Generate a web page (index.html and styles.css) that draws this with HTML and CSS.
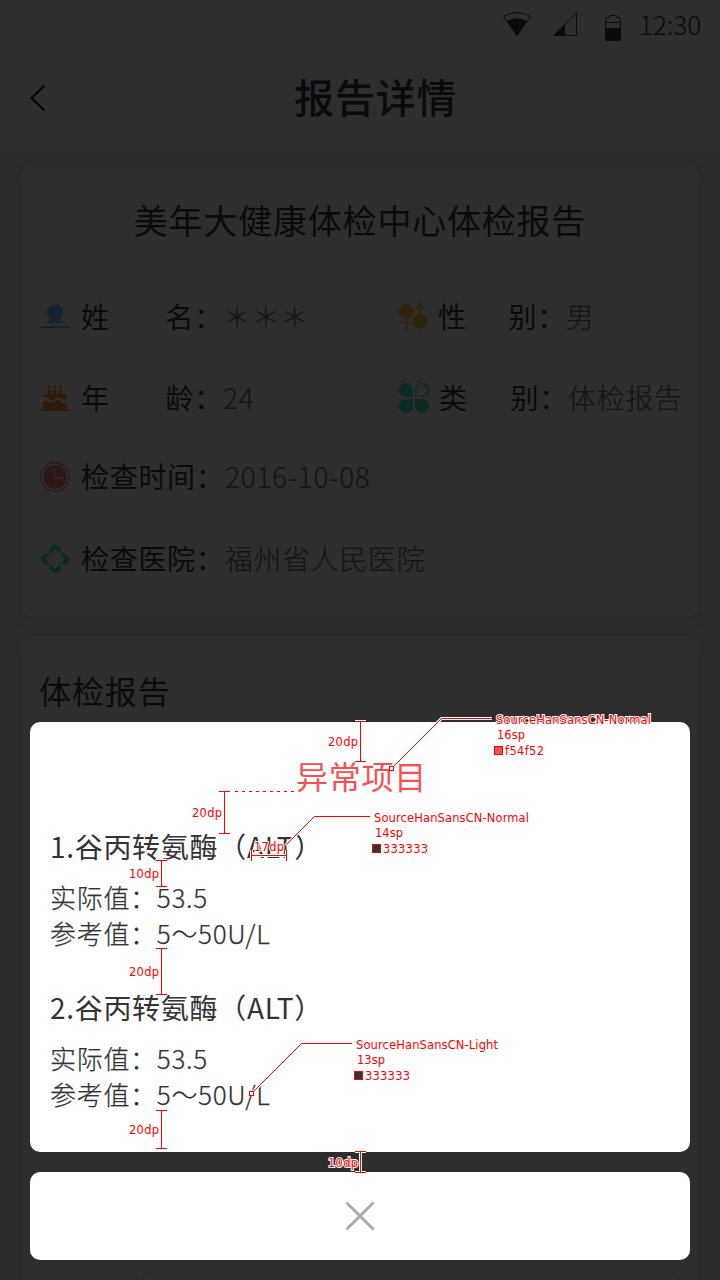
FILE: index.html
```html
<!DOCTYPE html>
<html lang="zh-CN">
<head>
<meta charset="utf-8">
<title>报告详情</title>
<link rel="stylesheet" href="styles.css">
</head>
<body>
<div class="screen">
  <header class="header">
    <div class="status">
      <svg class="wifi" width="30" height="26" viewBox="0 0 30 26"><path d="M1.500 4.500Q15-3.500 28.500 4.500L15 23.500Z" fill="none" stroke="#0a0a0a"/><path d="M5 9Q15 3.500 25 9L15 23.500Z" fill="#0a0a0a"/></svg>
      <svg class="signal" width="26" height="26" viewBox="0 0 26 26"><path d="M1 23.500H23.500V1Z" fill="none" stroke="#0a0a0a"/><path d="M0 24H12V12Z" fill="#0a0a0a"/></svg>
      <svg class="battery" width="18" height="28" viewBox="0 0 18 28"><path d="M1.500 5.500Q1.500 3.500 4 3.500H5Q5 1.500 7 1.500H11Q13 1.500 13 3.500H14Q16.500 3.500 16.500 5.500V24Q16.500 26.500 14 26.500H4Q1.500 26.500 1.500 24ZM1.500 8.500H16.500" fill="none" stroke="#0a0a0a"/><path d="M1 14H17V24Q17 27 14 27H4Q1 27 1 24Z" fill="#0a0a0a"/></svg>
      <span class="clock">12:30</span>
    </div>
    <div class="nav">
      <svg class="back" width="18" height="30" viewBox="0 0 18 30"><path d="M15.500 2.500L2.500 15L15.500 27.500" fill="none" stroke="#000" stroke-width="2"/></svg>
      <h1 class="page-title">报告详情</h1>
    </div>
  </header>

  <section class="card profile">
    <h2 class="card-title">美年大健康体检中心体检报告</h2>
    <div class="fields">
      <div class="row">
        <div class="field">
          <svg class="icon" width="30" height="30" viewBox="0 0 30 30" fill="#15222e"><circle cx="15" cy="10.500" r="8"/><path d="M12 16H18V18Q24 19 25.500 21.500H4.500Q6 19 12 18ZM0 24H30V26H0Z"/></svg>
          <span class="label short"><b>姓</b><b>名：</b></span><span class="value stars">＊＊＊</span>
        </div>
        <div class="field right">
          <svg class="icon" width="30" height="30" viewBox="0 0 30 30"><g fill="#2e230a"><circle cx="7.200" cy="9" r="7.200"/><circle cx="20.800" cy="19.500" r="7.300"/></g><path d="M7.300 15V26M2.500 20.500H12.500M20.800 14V3.500M16.500 7L20.800 2.500L25.100 7" fill="none" stroke="#2e230a" stroke-width="2" stroke-linecap="round"/></svg>
          <span class="label gender"><b>性</b><b>别：</b></span><span class="value">男</span>
        </div>
      </div>
      <div class="row">
        <div class="field">
          <svg class="icon" width="30" height="30" viewBox="0 0 30 30" fill="#2e1a08"><path d="M0 26H30V28H0ZM3 27V19Q6 17 9 19T15 18.500T21 19T27 19V27ZM3 15Q3 11 7 11H23Q27 11 27 15Q24 18 21 15.500T15 16T9 15.500T3 15ZM8 6.500H11V12H8ZM13.500 6.500H16.500V12H13.500ZM19 6.500H22V12H19Z"/><circle cx="9.500" cy="3.800" r="1.600"/><circle cx="15" cy="3.800" r="1.600"/><circle cx="20.500" cy="3.800" r="1.600"/></svg>
          <span class="label short"><b>年</b><b>龄：</b></span><span class="value age">24</span>
        </div>
        <div class="field right">
          <svg class="icon" width="30" height="30" viewBox="0 0 30 30"><path d="M14 14H7A7 7 0 1 1 14 7ZM14 16V23A7 7 0 1 1 7 16ZM16 16H23A7 7 0 1 1 16 23Z" fill="#0c2926"/><path d="M16.800 14V7A6.200 6.200 0 1 1 23 13.200H20" fill="none" stroke="#0c2926" stroke-width="1.600"/></svg>
          <span class="label kind"><b>类</b><b>别：</b></span><span class="value">体检报告</span>
        </div>
      </div>
      <div class="row date">
        <div class="field">
          <svg class="icon" width="30" height="30" viewBox="0 0 30 30"><circle cx="15" cy="15" r="14.300" fill="none" stroke="#2e1516" stroke-width="1.200"/><circle cx="15" cy="15" r="11.800" fill="#2e1516"/><path d="M14.500 7V16H24" fill="none" stroke="#2e2a2a" stroke-width="1.500"/></svg>
          <span class="label">检查时间：</span><span class="value">2016-10-08</span>
        </div>
      </div>
      <div class="row">
        <div class="field">
          <svg class="icon" width="30" height="30" viewBox="0 0 30 30"><g id="petal"><path d="M9 6.500Q9 5 10.500 4L13 1.500Q15-.5 17 1.500L19.500 4Q21 5 21 6.500Q20.500 8.500 18 10.500V8L16 6H14L12 8V10.500Q9.500 8.500 9 6.500Z" fill="#0d291d"/></g><use href="#petal" transform="rotate(90 15 15)"/><use href="#petal" transform="rotate(180 15 15)"/><use href="#petal" transform="rotate(270 15 15)"/></svg>
          <span class="label">检查医院：</span><span class="value">福州省人民医院</span>
        </div>
      </div>
    </div>
  </section>

  <section class="card report">
    <h2 class="section-title">体检报告</h2>
    <div class="report-box"></div>
  </section>

  <div class="modal">
    <div class="sheet">
      <h2 class="sheet-title">异常项目</h2>
      <div class="item">
        <h3 class="item-title">1.谷丙转氨酶（ALT）</h3>
        <p class="item-line">实际值：53.5</p>
        <p class="item-line">参考值：5～50U/L</p>
      </div>
      <div class="item">
        <h3 class="item-title">2.谷丙转氨酶（ALT）</h3>
        <p class="item-line">实际值：53.5</p>
        <p class="item-line">参考值：5～50U/L</p>
      </div>
    </div>
    <div class="close">
      <svg width="30" height="30" viewBox="0 0 30 30"><path d="M2.200 2.200L27.800 27.800M27.800 2.200L2.200 27.800" stroke="#aaa" stroke-width="2.800" stroke-linecap="round"/></svg>
    </div>
  </div>

  <svg class="specs" width="720" height="1280" viewBox="0 0 720 1280">
    <defs>
      <g id="lines">
        <path d="M355 721.500H366M360.500 721.500V761.500M355 761.500H366"/>
        <path d="M219 791.500H230M224.500 791.500V833.500M219 833.500H230"/>
        <path d="M251.500 850V861M251.500 855.500H286.500M286.500 850V861"/>
        <path d="M156 860.500H167M161.500 860.500V886.500M156 886.500H167"/>
        <path d="M156 948.500H167M161.500 948.500V994.500M156 994.500H167"/>
        <path d="M156 1110.500H167M161.500 1110.500V1148.500M156 1148.500H167"/>
        <path d="M355 1151.500H366M360.500 1151.500V1172.500M355 1172.500H366"/>
        <path d="M391.500 768.500L441.500 718.500H492"/>
        <path d="M285.500 845.500L314.500 816.500H370"/>
        <path d="M251.500 1093.500L301.500 1043.500H352"/>
      </g>
    </defs>
    <use href="#lines" class="halo"/>
    <use href="#lines" class="line"/>
    <path class="line" d="M235 791.500H295" stroke-dasharray="3 4"/>
    <rect class="handle" x="389.500" y="766.500" width="4" height="4"/>
    <rect class="handle" x="249.500" y="1091.500" width="4" height="4"/>
    <rect class="swatch red" x="494.500" y="746.500" width="8" height="8"/>
    <rect class="swatch" x="372.500" y="844.500" width="8" height="8"/>
    <rect class="swatch" x="354.500" y="1071.500" width="8" height="8"/>
    <g class="note">
      <text x="328" y="746" textLength="30">20dp</text>
      <text x="192" y="817" textLength="30">20dp</text>
      <text x="254" y="851" textLength="30">17dp</text>
      <text x="129" y="878" textLength="30">10dp</text>
      <text x="129" y="976" textLength="30">20dp</text>
      <text x="129" y="1134" textLength="30">20dp</text>
      <text x="328" y="1167" textLength="30">10dp</text>
      <text x="496" y="724" textLength="155">SourceHanSansCN-Normal</text>
      <text x="497" y="739" textLength="28">16sp</text>
      <text x="505" y="755" textLength="39">f54f52</text>
      <text x="374" y="822" textLength="155">SourceHanSansCN-Normal</text>
      <text x="375" y="837" textLength="28">14sp</text>
      <text x="383" y="853" textLength="45">333333</text>
      <text x="356" y="1049" textLength="142">SourceHanSansCN-Light</text>
      <text x="357" y="1064" textLength="28">13sp</text>
      <text x="365" y="1080" textLength="45">333333</text>
    </g>
  </svg>
</div>
</body>
</html>
```
FILE: styles.css
```css
* { box-sizing: border-box; }
body { margin: 0; }
h1, h2, h3, p { margin: 0; font-weight: 400; }
b { font-weight: inherit; }
svg { display: block; flex: none; }

.screen {
  position: relative;
  width: 720px;
  height: 1280px;
  overflow: hidden;
  background: #2d2d2d;
  color: #0a0a0a;
  font-family: "Noto Sans CJK SC", sans-serif;
  letter-spacing: .7px;
}

.header { height: 146px; background: #2e2e2e; }
.status { display: flex; align-items: center; height: 50px; padding-left: 502px; }
.signal { margin-left: 21px; }
.battery { margin-left: 25px; margin-top: 6px; }
.clock { margin-left: 17px; padding-bottom: 2px; font-size: 26px; font-weight: 300; line-height: 48px; letter-spacing: 0; white-space: nowrap; -webkit-text-stroke: .2px; }
.nav { display: flex; align-items: center; height: 96px; padding-left: 28px; }
.back { margin-left: .5px; }
.page-title { flex: 1; padding: 0 15px 4px 0; text-align: center; font-size: 40px; font-weight: 500; line-height: 92px; }

.card { margin: 0 20px; border-radius: 10px; background: #2e2e2e; box-shadow: 0 4px 8px #2b2b2b; }
.profile { height: 450px; margin-top: 20px; }
.card-title { padding-top: 29px; text-align: center; font-size: 34px; line-height: 50px; letter-spacing: .8px; }
.fields { padding: 31px 0 0 20px; }
.row { display: flex; height: 81px; align-items: center; }
.row.date { height: 80px; padding-bottom: 2px; }
.field { display: flex; align-items: center; width: 358px; height: 40px; font-size: 28px; line-height: 36px; white-space: nowrap; }
.label, .value { padding-bottom: 1px; }
.date .label, .date .value { padding-bottom: 3px; }
.field.right { width: 300px; }
.icon { margin-right: 11px; }
.right .icon { margin-left: 1px; margin-right: 10px; }
.label { width: 144px; }
.short, .gender, .kind { display: flex; justify-content: space-between; }
.short { width: 142px; }
.gender { width: 128px; margin-left: -1px; }
.kind { width: 129px; }
.value { color: #141414; font-weight: 300; -webkit-text-stroke: .2px; }

.report { height: 700px; margin-top: 20px; padding: 30px 0 0 19px; }
.section-title { font-size: 32px; line-height: 48px; letter-spacing: .9px; }
.report-box { height: 60px; margin: 558px 20px 0 102px; border: 1px solid #2a2a2a; border-radius: 10px; }

.modal { position: absolute; top: 722px; left: 30px; width: 660px; display: grid; gap: 20px; color: #333; }
.sheet { height: 430px; padding: 29px 20px 0; border-radius: 10px; background: #fff; }
.sheet-title { margin-bottom: 27px; padding-left: 3px; color: #f54f52; text-align: center; font-size: 32px; font-weight: 350; line-height: 48px; -webkit-text-stroke: .2px; }
.item { margin-bottom: 36px; }
.item-title { margin-bottom: 13px; font-size: 28px; line-height: 40px; }
.item-line { font-size: 26px; font-weight: 300; line-height: 36px; -webkit-text-stroke: .25px; }
.close { display: flex; align-items: center; justify-content: center; height: 88px; border-radius: 10px; background: #fff; }

.specs { position: absolute; inset: 0; }
.halo { fill: none; stroke: #fff; stroke-width: 3; }
.line { fill: none; stroke: #f00; stroke-width: 1; }
.handle { fill: #fff; stroke: #f00; }
.swatch { fill: #333; stroke: #f00; }
.swatch.red { fill: #f54f52; }
.note { fill: #f00; stroke: #fff; stroke-width: 2px; paint-order: stroke; font-family: "DejaVu Sans", sans-serif; font-size: 11.5px; letter-spacing: 0; }
```
